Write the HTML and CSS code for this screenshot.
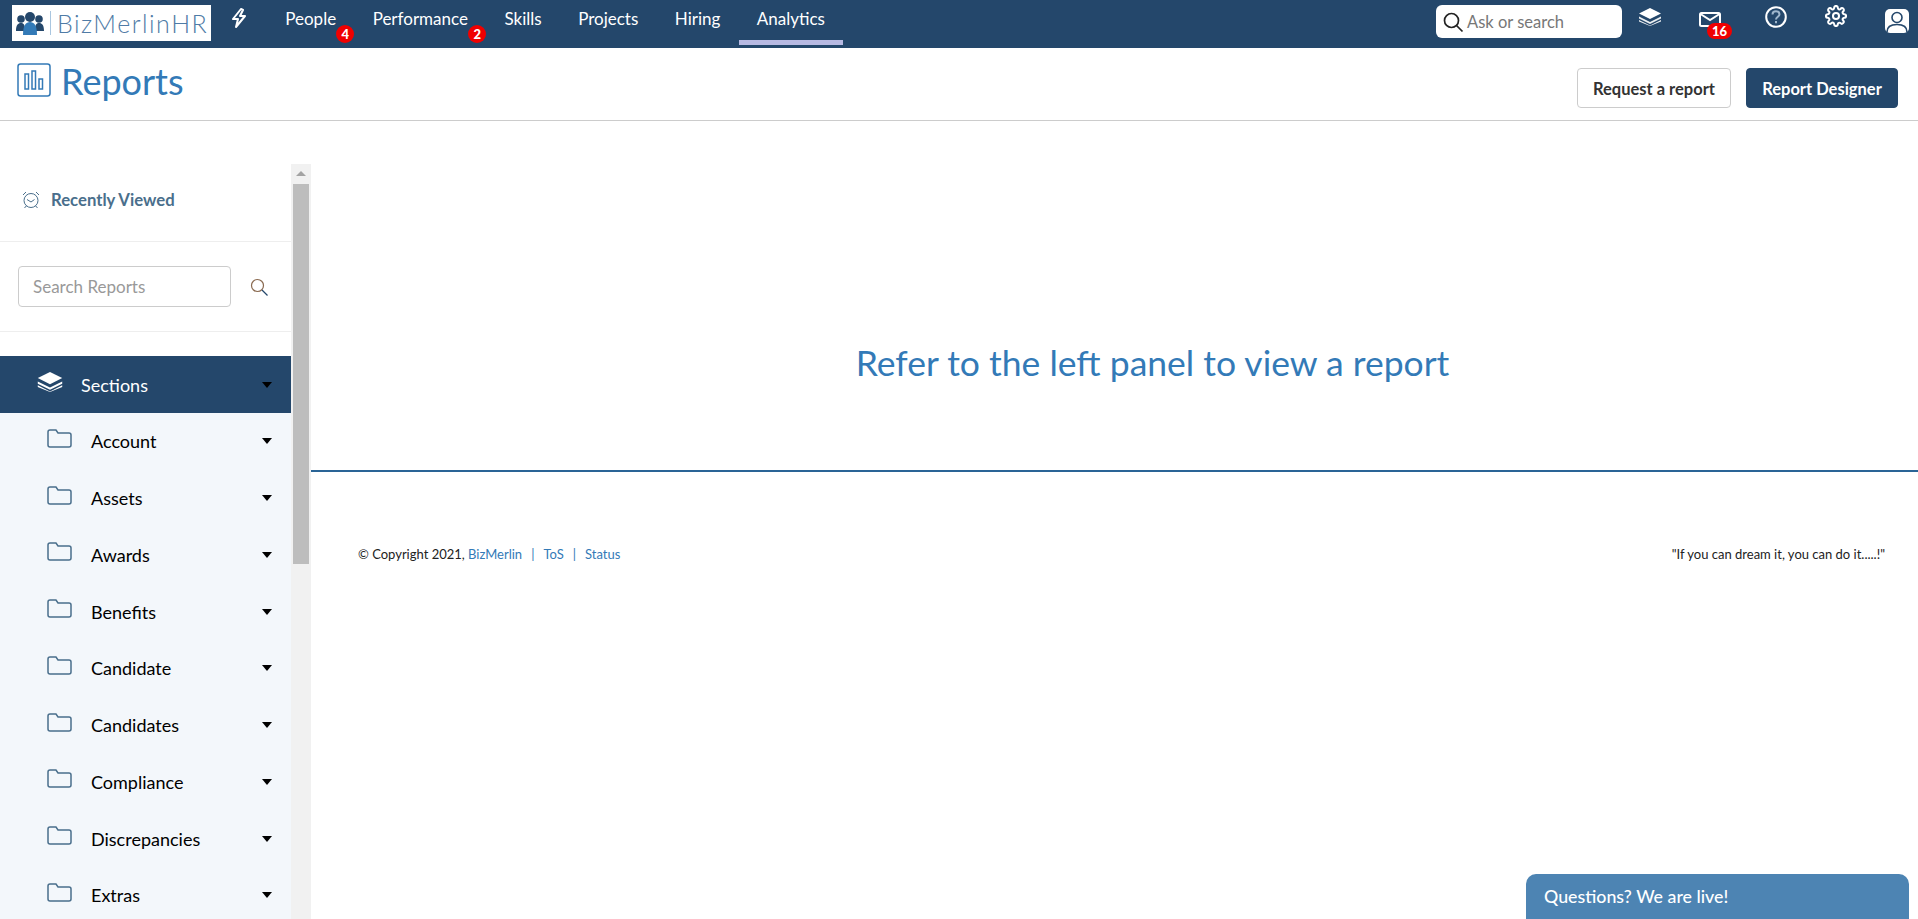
FILE: index.html
```html
<!DOCTYPE html>
<html lang="en">
<head>
    <meta charset="UTF-8">
    <title>Reports - BizMerlinHR</title>
    <link rel="stylesheet" href="styles.css">
</head>
<body>
    <nav class="topnav">
        <div class="logo">
            <svg class="logo-mark" width="28" height="24" viewBox="0 0 28 24">
                <circle cx="5" cy="8" r="3.8" fill="#24476b"/>
                <circle cx="23" cy="8" r="3.8" fill="#24476b"/>
                <path d="M0 20c0-6 2-8 5-8s4 2 4 8zM19 20c0-6 1-8 4-8s5 2 5 8z" fill="#24476b"/>
                <circle cx="14" cy="6" r="5" fill="#24476b"/>
                <path d="M7 24c0-10 3-13 7-13s7 3 7 13z" fill="#337ab7"/>
            </svg>
            <span class="logo-bar"></span>
            <span class="logo-text">BizMerlinHR</span>
        </div>
        <svg class="bolt" width="18" height="20" viewBox="0 0 18 20" fill="none" stroke="#fff" stroke-width="2" stroke-linejoin="round">
            <path d="M11 1 3 11h5l-2 8 9-11h-5l3-6z"/>
        </svg>
        <ul class="nav-links">
            <li>People<span class="badge">4</span></li>
            <li>Performance<span class="badge">2</span></li>
            <li>Skills</li>
            <li>Projects</li>
            <li>Hiring</li>
            <li class="active">Analytics</li>
        </ul>
        <div class="nav-right">
            <div class="ask">
                <svg width="22" height="22" viewBox="0 0 22 22" fill="none" stroke="#222" stroke-width="1.7">
                    <circle cx="9.5" cy="9.5" r="7"/><path d="m14.5 14.5 6 6"/>
                </svg>
                <span>Ask or search</span>
            </div>
            <svg class="nav-icon layers" width="22" height="18" viewBox="0 0 22 18" fill="#fff">
                <path d="M11 0 22 5.500 11 11 0 5.500z"/>
                <path d="M0 8.500 11 14l11-5.500v2L11 16 0 10.500z" opacity=".9"/>
                <path d="M0 12l11 5.500L22 12v1.500L11 18 0 13.500z" opacity=".9"/>
            </svg>
            <div class="nav-icon mail">
                <svg width="22" height="15" viewBox="0 0 22 15" fill="none" stroke="#fff" stroke-width="2">
                    <rect x="1" y="1" width="20" height="13" rx="1.500"/><path d="m1.500 2 9.500 6 9.500-6"/>
                </svg>
                <span class="badge badge-wide">16</span>
            </div>
            <svg class="nav-icon help" width="22" height="22" viewBox="0 0 22 22" fill="none" stroke="#fff" stroke-width="2">
                <circle cx="11" cy="11" r="9.800"/>
                <path d="M7.500 8.500c0-2 1.600-3.200 3.500-3.200s3.500 1.200 3.500 3c0 2.500-3.500 2.500-3.500 5.200" stroke="#9fb6cc"/>
                <path d="M11 15v2.200" stroke="#9fb6cc"/>
            </svg>
            <svg class="nav-icon gear" width="22" height="22" viewBox="0 0 24 24" fill="none" stroke="#fff" stroke-width="2.200" stroke-linejoin="round">
                <circle cx="12" cy="12" r="3.300"/>
                <path d="M19.400 15a1.700 1.700 0 0 0 .3 1.800l.1.100a2 2 0 1 1-2.900 2.900l-.1-.1a1.700 1.700 0 0 0-2.800 1.200V21a2 2 0 1 1-4 0v-.1a1.700 1.700 0 0 0-2.900-1.200l-.1.100a2 2 0 1 1-2.800-2.800l.1-.1a1.700 1.700 0 0 0-1.200-2.900H3a2 2 0 1 1 0-4h.1a1.700 1.700 0 0 0 1.200-2.900l-.1-.1a2 2 0 1 1 2.800-2.800l.1.100a1.700 1.700 0 0 0 2.900-1.200V3a2 2 0 1 1 4 0v.1a1.700 1.700 0 0 0 2.900 1.200l.1-.1a2 2 0 1 1 2.800 2.800l-.1.100a1.700 1.700 0 0 0 1.200 2.900h.1a2 2 0 1 1 0 4h-.1a1.700 1.700 0 0 0-1.500 1z"/>
            </svg>
            <svg class="nav-icon user" width="24" height="24" viewBox="0 0 24 24">
                <rect width="24" height="24" rx="5" fill="#fff"/>
                <circle cx="12" cy="8.500" r="5" fill="none" stroke="#24476b" stroke-width="1.600"/>
                <path d="M2 23c0-5 4-7.500 10-7.500S22 18 22 23" fill="none" stroke="#24476b" stroke-width="1.600"/>
            </svg>
        </div>
    </nav>

    <header class="page-head">
        <div class="page-title">
            <svg width="34" height="34" viewBox="0 0 34 34" fill="none" stroke="#337ab7" stroke-width="1.500">
                <rect x="1" y="1" width="32" height="32" rx="2.500"/>
                <rect x="8" y="11" width="3.500" height="15"/>
                <rect x="15" y="8" width="3.500" height="18"/>
                <rect x="22" y="16" width="3.500" height="10"/>
            </svg>
            <h1>Reports</h1>
        </div>
        <div class="head-actions">
            <button class="btn">Request a report</button>
            <button class="btn btn-dark">Report Designer</button>
        </div>
    </header>

    <div class="content">
        <aside class="sidebar">
            <div class="side-panel">
                <div class="recent">
                    <svg width="18" height="18" viewBox="0 0 18 18" fill="none" stroke="#4a6f8c" stroke-width="1">
                        <circle cx="9" cy="9.500" r="7"/>
                        <path d="M5 8.500 9 11l3.500-2.500M1 4l3-3M17 4l-3-3M2.500 17l2-2.300M15.500 17l-2-2.300"/>
                    </svg>
                    <span>Recently Viewed</span>
                </div>
                <div class="side-search">
                    <div class="search-input">Search Reports</div>
                    <svg width="18" height="18" viewBox="0 0 18 18" fill="none" stroke="#555" stroke-width="1.200">
                        <circle cx="7.500" cy="7.500" r="6" stroke="#8a6a50"/><path d="m12 12 5.500 5.500" stroke="#24476b"/>
                    </svg>
                </div>
                <div class="section-head">
                    <svg width="26" height="20" viewBox="0 0 22 18" fill="#fff">
                        <path d="M11 0 22 5.500 11 11 0 5.500z"/>
                        <path d="M0 8.500 11 14l11-5.500v2L11 16 0 10.500z"/>
                        <path d="M0 12l11 5.500L22 12v1.500L11 18 0 13.500z"/>
                    </svg>
                    <span>Sections</span>
                    <i class="caret"></i>
                </div>
                <ul class="section-list">
                    <li><svg class="folder" width="25" height="19" viewBox="0 0 25 19"><path d="M1 3a2 2 0 0 1 2-2h6l2 3h11a2 2 0 0 1 2 2v10a2 2 0 0 1-2 2H3a2 2 0 0 1-2-2z"/></svg><span>Account</span><i class="caret"></i></li>
                    <li><svg class="folder" width="25" height="19" viewBox="0 0 25 19"><path d="M1 3a2 2 0 0 1 2-2h6l2 3h11a2 2 0 0 1 2 2v10a2 2 0 0 1-2 2H3a2 2 0 0 1-2-2z"/></svg><span>Assets</span><i class="caret"></i></li>
                    <li><svg class="folder" width="25" height="19" viewBox="0 0 25 19"><path d="M1 3a2 2 0 0 1 2-2h6l2 3h11a2 2 0 0 1 2 2v10a2 2 0 0 1-2 2H3a2 2 0 0 1-2-2z"/></svg><span>Awards</span><i class="caret"></i></li>
                    <li><svg class="folder" width="25" height="19" viewBox="0 0 25 19"><path d="M1 3a2 2 0 0 1 2-2h6l2 3h11a2 2 0 0 1 2 2v10a2 2 0 0 1-2 2H3a2 2 0 0 1-2-2z"/></svg><span>Benefits</span><i class="caret"></i></li>
                    <li><svg class="folder" width="25" height="19" viewBox="0 0 25 19"><path d="M1 3a2 2 0 0 1 2-2h6l2 3h11a2 2 0 0 1 2 2v10a2 2 0 0 1-2 2H3a2 2 0 0 1-2-2z"/></svg><span>Candidate</span><i class="caret"></i></li>
                    <li><svg class="folder" width="25" height="19" viewBox="0 0 25 19"><path d="M1 3a2 2 0 0 1 2-2h6l2 3h11a2 2 0 0 1 2 2v10a2 2 0 0 1-2 2H3a2 2 0 0 1-2-2z"/></svg><span>Candidates</span><i class="caret"></i></li>
                    <li><svg class="folder" width="25" height="19" viewBox="0 0 25 19"><path d="M1 3a2 2 0 0 1 2-2h6l2 3h11a2 2 0 0 1 2 2v10a2 2 0 0 1-2 2H3a2 2 0 0 1-2-2z"/></svg><span>Compliance</span><i class="caret"></i></li>
                    <li><svg class="folder" width="25" height="19" viewBox="0 0 25 19"><path d="M1 3a2 2 0 0 1 2-2h6l2 3h11a2 2 0 0 1 2 2v10a2 2 0 0 1-2 2H3a2 2 0 0 1-2-2z"/></svg><span>Discrepancies</span><i class="caret"></i></li>
                    <li><svg class="folder" width="25" height="19" viewBox="0 0 25 19"><path d="M1 3a2 2 0 0 1 2-2h6l2 3h11a2 2 0 0 1 2 2v10a2 2 0 0 1-2 2H3a2 2 0 0 1-2-2z"/></svg><span>Extras</span><i class="caret"></i></li>
                </ul>
            </div>
            <div class="scrollbar">
                <div class="scroll-up"></div>
                <div class="scroll-thumb"></div>
            </div>
        </aside>

        <main class="main">
            <div class="notice">
                <h2>Refer to the left panel to view a report</h2>
            </div>
            <footer class="footer">
                <div>© Copyright 2021, <a>BizMerlin</a><span class="sep">|</span><a>ToS</a><span class="sep">|</span><a>Status</a></div>
                <div>"If you can dream it, you can do it.....!"</div>
            </footer>
        </main>
    </div>

    <div class="chat">Questions? We are live!</div>
</body>
</html>
```

FILE: styles.css
```css
* {
    box-sizing: border-box;
}

html, body {
    height: 100%;
}

body {
    margin: 0;
    font-family: Lato, "Open Sans", sans-serif;
    color: #222;
    background: #fff;
    display: flex;
    flex-direction: column;
    overflow: hidden;
}

/* top bar */
.topnav {
    height: 48px;
    flex: none;
    background: #24476b;
    display: flex;
    align-items: flex-start;
    color: #fff;
}

.logo {
    width: 199px;
    height: 36px;
    margin: 5px 0 0 12px;
    background: #fff;
    display: flex;
    align-items: center;
    padding-left: 4px;
}

.logo-bar {
    width: 1px;
    height: 24px;
    background: #a9c6e0;
    margin: 0 6px 0 6px;
}

.logo-text {
    font-size: 25px;
    font-weight: 300;
    letter-spacing: 1.5px;
    color: #4f7ba6;
    white-space: nowrap;
}

.bolt {
    margin: 8px 0 0 19px;
}

.nav-links {
    display: flex;
    list-style: none;
    margin: 0 0 0 19px;
    padding: 0;
}

.nav-links li {
    position: relative;
    height: 45px;
    padding: 7px 18.250px 0;
    font-size: 17px;
    line-height: 24px;
    border-bottom: 5px solid transparent;
}

.nav-links li.active {
    border-bottom-color: #b7b9e2;
}

.badge {
    position: absolute;
    right: 0;
    top: 25px;
    min-width: 18px;
    height: 18px;
    border-radius: 9px;
    background: #f00000;
    color: #fff;
    font-size: 13px;
    font-weight: 900;
    line-height: 18px;
    text-align: center;
}

.nav-right {
    margin-left: auto;
    display: flex;
    align-items: flex-start;
    position: relative;
    padding-right: 9px;
}

.ask {
    width: 186px;
    height: 33px;
    margin-top: 5px;
    background: #fff;
    border-radius: 6px;
    display: flex;
    align-items: center;
    gap: 3px;
    padding-left: 6px;
    font-size: 16.500px;
    color: #777;
}

.nav-icon {
    flex: none;
}

.layers {
    margin: 8px 0 0 17px;
}

.mail {
    position: relative;
    width: 22px;
    margin: 12px 0 0 38px;
}

.mail svg {
    display: block;
}

.badge-wide {
    top: 11px;
    left: 8px;
    right: auto;
    width: 25px;
    height: 16px;
    line-height: 16px;
}

.help {
    margin: 6px 0 0 44px;
}

.gear {
    margin: 5px 0 0 38px;
}

.user {
    margin: 9px 0 0 38px;
}

/* page title row */
.page-head {
    height: 73px;
    flex: none;
    border-bottom: 1px solid #ccc;
    display: flex;
    justify-content: space-between;
    padding: 15px 20px 0 17px;
}

.page-title {
    display: flex;
    align-items: flex-start;
    gap: 10px;
    color: #337ab7;
}

.page-title h1 {
    margin: -2px 0 0;
    font-size: 36px;
    font-weight: 400;
    line-height: 40px;
}

.head-actions {
    display: flex;
    gap: 15px;
    align-items: flex-start;
    padding-top: 5px;
}

.btn {
    height: 40px;
    width: 154px;
    padding: 2px 0 0;
    font-family: inherit;
    font-size: 16.500px;
    font-weight: 700;
    color: #333;
    background: #fff;
    border: 1px solid #ccc;
    border-radius: 4px;
}

.btn-dark {
    width: 152px;
    background: #24476b;
    border-color: #24476b;
    color: #fff;
}

/* body */
.content {
    flex: 1;
    min-height: 0;
    display: flex;
}

.sidebar {
    width: 311px;
    flex: none;
    display: flex;
    padding-top: 43px;
    overflow: hidden;
}

.side-panel {
    width: 291px;
    flex: none;
}

.recent {
    height: 78px;
    border-bottom: 1px solid #eee;
    display: flex;
    align-items: center;
    gap: 11px;
    padding: 0 0 6px 22px;
    font-size: 16.700px;
    font-weight: 700;
    color: #4a6f8c;
}

.side-search {
    height: 90px;
    border-bottom: 1px solid #eee;
    display: flex;
    align-items: center;
    gap: 19px;
    padding-left: 18px;
}

.search-input {
    width: 213px;
    height: 41px;
    border: 1px solid #ccc;
    border-radius: 4px;
    padding: 0 14px;
    font-size: 17px;
    line-height: 39px;
    color: #999;
}

.section-head {
    height: 57px;
    margin-top: 24px;
    background: #24476b;
    color: #fff;
    display: flex;
    align-items: center;
    padding: 0 19px 0 37px;
    font-size: 18px;
}

.section-head svg {
    margin: -5px 18px 0 0;
}

.section-list {
    list-style: none;
    margin: 0;
    padding: 0;
    background: #f3f7fb;
}

.section-list li {
    height: 56.750px;
    display: flex;
    align-items: center;
    padding: 0 19px 0 47px;
    font-size: 18px;
    color: #000;
}

.folder {
    margin: -6px 19px 0 0;
    fill: none;
    stroke: #4a6f8c;
    stroke-width: 1.500;
}

.caret {
    margin-left: auto;
    border-left: 5px solid transparent;
    border-right: 5px solid transparent;
    border-top: 6px solid #000;
}

.scrollbar {
    width: 20px;
    flex: none;
    background: #f1f1f1;
    padding: 0 2px;
}

.scroll-up {
    height: 20px;
    position: relative;
}

.scroll-up::after {
    content: "";
    position: absolute;
    left: 3px;
    top: 7px;
    border-left: 5px solid transparent;
    border-right: 5px solid transparent;
    border-bottom: 5px solid #a3a3a3;
}

.scroll-thumb {
    height: 380px;
    background: #bdbdbd;
}

.main {
    flex: 1;
    min-width: 0;
}

.notice {
    height: 351px;
    border-bottom: 2px solid #2a6496;
    text-align: center;
    padding: 220px 0 0 76px;
}

.notice h2 {
    margin: 0;
    font-size: 35.500px;
    font-weight: 400;
    line-height: 44px;
    color: #337ab7;
}

.footer {
    display: flex;
    justify-content: space-between;
    padding: 73px 33px 0 47px;
    font-size: 13px;
    line-height: 18px;
}

.footer a {
    color: #337ab7;
}

.sep {
    margin: 0 9px;
    color: #337ab7;
}

.chat {
    position: fixed;
    left: 1526px;
    bottom: 0;
    width: 383px;
    height: 45px;
    padding: 9px 18px 0;
    border-radius: 10px 10px 0 0;
    background: #4d84b3;
    color: #fff;
    font-size: 17.800px;
    font-weight: 500;
    line-height: 26px;
}
```
